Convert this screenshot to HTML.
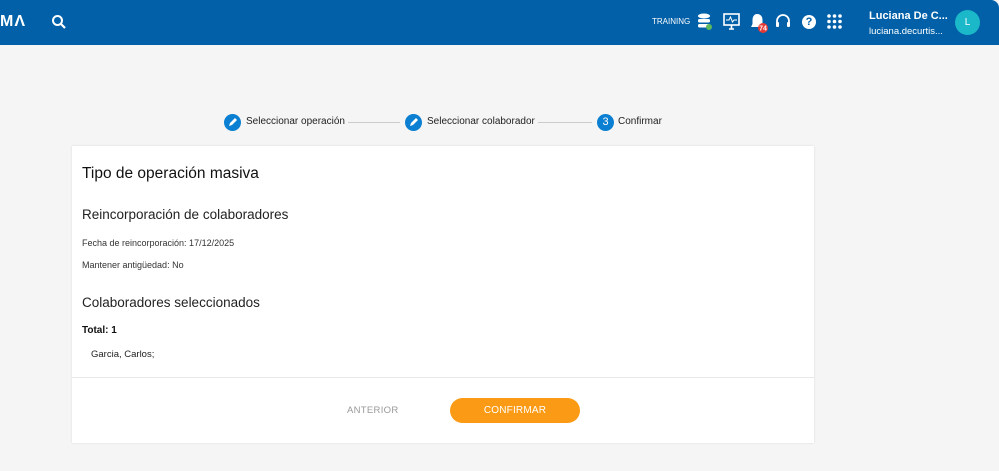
<!DOCTYPE html>
<html><head><meta charset="utf-8"><style>
*{margin:0;padding:0;box-sizing:border-box}
body{width:999px;height:471px;background:#f5f5f5;font-family:"Liberation Sans",sans-serif;position:relative;overflow:hidden;color:#222}
.a{position:absolute;white-space:nowrap}
#hdr{position:absolute;left:0;top:0;width:999px;height:45px;background:#0160a8;border-top-right-radius:8px}
.step{position:absolute;top:114px;width:17px;height:17px;border-radius:50%;background:#0b7fd1;color:#fff;font-size:11px;text-align:center;line-height:17px}
.sl{position:absolute;top:116px;font-size:10px;color:#222}
.line{position:absolute;top:122px;height:1px;background:#ccc}
#card{position:absolute;left:72px;top:146px;width:742px;height:297px;background:#fff;box-shadow:0 0 2px rgba(0,0,0,.12)}
</style></head><body>
<div id="hdr">
<div class="a" style="left:0;top:13px;color:#fff;font-weight:bold;font-size:16px;letter-spacing:1px">MΛ</div>
<svg class="a" style="left:51px;top:14px" width="16" height="16" viewBox="0 0 16 16"><circle cx="6.5" cy="6.5" r="4.5" stroke="#fff" stroke-width="2" fill="none"/><path d="M10 10l4 4" stroke="#fff" stroke-width="2.2"/></svg>
<div class="a" style="left:652px;top:17px;color:#fff;font-size:8px">TRAINING</div>
<svg class="a" style="left:697px;top:13px" width="16" height="18" viewBox="0 0 16 18"><ellipse cx="7" cy="3" rx="6" ry="2.5" fill="#fff"/><rect x="1" y="6" width="12" height="3.5" rx="1.5" fill="#fff"/><rect x="1" y="11" width="12" height="3.5" rx="1.5" fill="#fff"/><circle cx="12" cy="14" r="3" fill="#5cb85c"/></svg>
<svg class="a" style="left:723px;top:13px" width="17" height="17" viewBox="0 0 17 17"><rect x="1" y="1" width="15" height="11" fill="none" stroke="#fff" stroke-width="1.6"/><path d="M3 7h3l1.5-3 2 5 1.5-2h3" stroke="#fff" fill="none"/><path d="M6 16h5M8.5 12v4" stroke="#fff" stroke-width="1.6"/></svg>
<svg class="a" style="left:750px;top:12px" width="20" height="22" viewBox="0 0 20 22"><path d="M7 2c-3 0-4.5 3-4.5 6v4L1 15h13l-1.5-3V8c0-3-1.5-6-5.5-6z" fill="#fff"/><circle cx="13" cy="16" r="5" fill="#e53935"/><text x="13" y="18.5" font-size="7" fill="#fff" text-anchor="middle" font-family="Liberation Sans" font-weight="bold">74</text></svg>
<svg class="a" style="left:775px;top:13px" width="16" height="17" viewBox="0 0 16 17"><path d="M2 11V8a6 6 0 0112 0v3" fill="none" stroke="#fff" stroke-width="1.8"/><rect x="1" y="9" width="3" height="5" rx="1" fill="#fff"/><rect x="12" y="9" width="3" height="5" rx="1" fill="#fff"/></svg>
<div class="a" style="left:802px;top:15px;width:14px;height:14px;border-radius:50%;background:#fff;color:#0160a8;font-size:11px;font-weight:bold;text-align:center;line-height:14px">?</div>
<svg class="a" style="left:827px;top:14px" width="15" height="15" viewBox="0 0 15 15" fill="#fff"><circle cx="2" cy="2" r="1.8"/><circle cx="7.5" cy="2" r="1.8"/><circle cx="13" cy="2" r="1.8"/><circle cx="2" cy="7.5" r="1.8"/><circle cx="7.5" cy="7.5" r="1.8"/><circle cx="13" cy="7.5" r="1.8"/><circle cx="2" cy="13" r="1.8"/><circle cx="7.5" cy="13" r="1.8"/><circle cx="13" cy="13" r="1.8"/></svg>
<div class="a" style="left:869px;top:10px;color:#fff;font-size:11px;font-weight:bold">Luciana De C...</div>
<div class="a" style="left:869px;top:26px;color:#fff;font-size:9.5px">luciana.decurtis...</div>
<div class="a" style="left:955px;top:10px;width:25px;height:25px;border-radius:50%;background:#1bb8c9;color:#fff;font-size:10px;text-align:center;line-height:25px">L</div>
</div>
<div class="step" style="left:224px"><svg width="17" height="17" viewBox="0 0 17 17"><path d="M5 12l1-3 5-5 2 2-5 5z" fill="#fff"/></svg></div>
<div class="sl" style="left:246px">Seleccionar operación</div>
<div class="line" style="left:348px;width:52px"></div>
<div class="step" style="left:405px"><svg width="17" height="17" viewBox="0 0 17 17"><path d="M5 12l1-3 5-5 2 2-5 5z" fill="#fff"/></svg></div>
<div class="sl" style="left:427px">Seleccionar colaborador</div>
<div class="line" style="left:538px;width:54px"></div>
<div class="step" style="left:597px">3</div>
<div class="sl" style="left:618px">Confirmar</div>
<div id="card">
<div class="a" style="left:10px;top:19px;font-size:15.5px;color:#111">Tipo de operación masiva</div>
<div class="a" style="left:10px;top:61px;font-size:13.5px;color:#222">Reincorporación de colaboradores</div>
<div class="a" style="left:10px;top:92px;font-size:9px;color:#333">Fecha de reincorporación: 17/12/2025</div>
<div class="a" style="left:10px;top:114px;font-size:9px;color:#333">Mantener antigüedad: No</div>
<div class="a" style="left:10px;top:149px;font-size:13.5px;color:#222">Colaboradores seleccionados</div>
<div class="a" style="left:10px;top:179px;font-size:10px;font-weight:bold;color:#111">Total: 1</div>
<div class="a" style="left:19px;top:203px;font-size:9.5px;color:#222">Garcia, Carlos;</div>
<div class="a" style="left:0;top:231px;width:742px;height:1px;background:#e8e8e8"></div>
<div class="a" style="left:275px;top:259px;font-size:9.5px;color:#999;letter-spacing:.3px">ANTERIOR</div>
<div class="a" style="left:378px;top:252px;width:130px;height:25px;border-radius:13px;background:#fb9a14;color:#fff;font-size:10px;text-align:center;line-height:25px;letter-spacing:.2px">CONFIRMAR</div>
</div>
</body></html>
